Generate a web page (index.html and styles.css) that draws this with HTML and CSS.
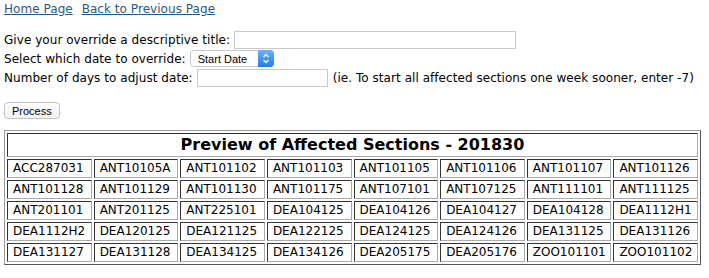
FILE: index.html
```html
<!DOCTYPE html>
<html lang="en">
<head>
    <meta charset="UTF-8">
    <title>Section Date Override</title>
    <link rel="stylesheet" href="styles.css">
</head>
<body>

    <div class="nav">
        <a href="#">Home Page</a>
        <a href="#">Back to Previous Page</a>
    </div>

    <form class="override-form">
        <div class="form-row">
            <label for="title">Give your override a descriptive title:</label>
            <input type="text" id="title" class="title-input">
        </div>
        <div class="form-row">
            <label for="whichDate">Select which date to override:</label>
            <span class="select-wrap">
                <select id="whichDate">
                    <option>Start Date</option>
                    <option>End Date</option>
                </select>
                <span class="select-arrows">
                    <svg width="8" height="11" viewBox="0 0 8 11">
                        <path d="M1.5 4 L4 1.5 L6.5 4 M1.5 7 L4 9.5 L6.5 7" fill="none" stroke="#fff" stroke-width="1.3"/>
                    </svg>
                </span>
            </span>
        </div>
        <div class="form-row">
            <label for="days">Number of days to adjust date:</label>
            <input type="text" id="days" class="days-input">
            <span class="hint">(ie. To start all affected sections one week sooner, enter -7)</span>
        </div>

        <button type="button" class="process-btn">Process</button>
    </form>

    <table class="preview">
        <tr>
            <th colspan="8">Preview of Affected Sections - 201830</th>
        </tr>
        <tr>
            <td>ACC287031</td><td>ANT10105A</td><td>ANT101102</td><td>ANT101103</td>
            <td>ANT101105</td><td>ANT101106</td><td>ANT101107</td><td>ANT101126</td>
        </tr>
        <tr>
            <td>ANT101128</td><td>ANT101129</td><td>ANT101130</td><td>ANT101175</td>
            <td>ANT107101</td><td>ANT107125</td><td>ANT111101</td><td>ANT111125</td>
        </tr>
        <tr>
            <td>ANT201101</td><td>ANT201125</td><td>ANT225101</td><td>DEA104125</td>
            <td>DEA104126</td><td>DEA104127</td><td>DEA104128</td><td>DEA1112H1</td>
        </tr>
        <tr>
            <td>DEA1112H2</td><td>DEA120125</td><td>DEA121125</td><td>DEA122125</td>
            <td>DEA124125</td><td>DEA124126</td><td>DEA131125</td><td>DEA131126</td>
        </tr>
        <tr>
            <td>DEA131127</td><td>DEA131128</td><td>DEA134125</td><td>DEA134126</td>
            <td>DEA205175</td><td>DEA205176</td><td>ZOO101101</td><td>ZOO101102</td>
        </tr>
    </table>

</body>
</html>
```

FILE: styles.css
```css
body {
    margin: 0;
    padding: 1px 4px;
    font-family: "DejaVu Sans", Verdana, sans-serif;
    font-size: 12px;
    color: #000;
    background: #fff;
}

.nav {
    line-height: 16px;
    margin-bottom: 14px;
    letter-spacing: 0.05px;
}

.nav a {
    color: #1d5b8c;
    margin-right: 5px;
}

.form-row {
    display: flex;
    align-items: center;
    height: 18px;
    margin-bottom: 1px;
    white-space: nowrap;
    letter-spacing: 0.05px;
}

.form-row:nth-child(2) {
    height: 17px;
    margin-bottom: 2px;
}

.form-row label {
    margin-right: 4px;
}

.title-input,
.days-input {
    height: 18px;
    box-sizing: border-box;
    border: 1px solid #c8c8c8;
    padding: 0 3px;
    font-size: 12px;
}

.title-input {
    width: 282px;
}

.days-input {
    width: 131px;
    margin-right: 5px;
}

.select-wrap {
    position: relative;
    display: inline-block;
    height: 17px;
}

.select-wrap select {
    -webkit-appearance: none;
    appearance: none;
    display: block;
    width: 84px;
    height: 17px;
    box-sizing: border-box;
    border: 1px solid #c9c9c9;
    border-radius: 4px;
    background: #fff;
    font-family: "Liberation Sans", Helvetica, sans-serif;
    font-size: 11px;
    letter-spacing: 0;
    padding: 0 0 0 7px;
    color: #000;
}

.select-arrows {
    position: absolute;
    right: 0;
    top: 0;
    width: 16px;
    height: 17px;
    border-radius: 0 4px 4px 0;
    background: linear-gradient(#6db2f9, #1b7ef5);
    display: flex;
    align-items: center;
    justify-content: center;
}

.process-btn {
    display: block;
    margin-top: 15px;
    height: 17px;
    padding: 0 7px;
    font-family: "Liberation Sans", Helvetica, sans-serif;
    font-size: 11px;
    border: 1px solid #c4c4c4;
    border-radius: 4px;
    background: linear-gradient(#fff, #f2f2f2);
    color: #000;
}

.preview {
    margin-top: 11px;
    width: 697px;
    table-layout: fixed;
    border-spacing: 2px;
    border: 1px solid;
    border-color: #999 #555 #555 #999;
}

.preview th {
    font-size: 16px;
    line-height: 20px;
    padding: 1px;
    border: 1px solid;
    border-color: #333 #aaa #aaa #333;
}

.preview td {
    line-height: 15px;
    padding: 1px 4px 1px 5px;
    border: 1px solid;
    border-color: #333 #aaa #aaa #333;
    white-space: nowrap;
}
```
